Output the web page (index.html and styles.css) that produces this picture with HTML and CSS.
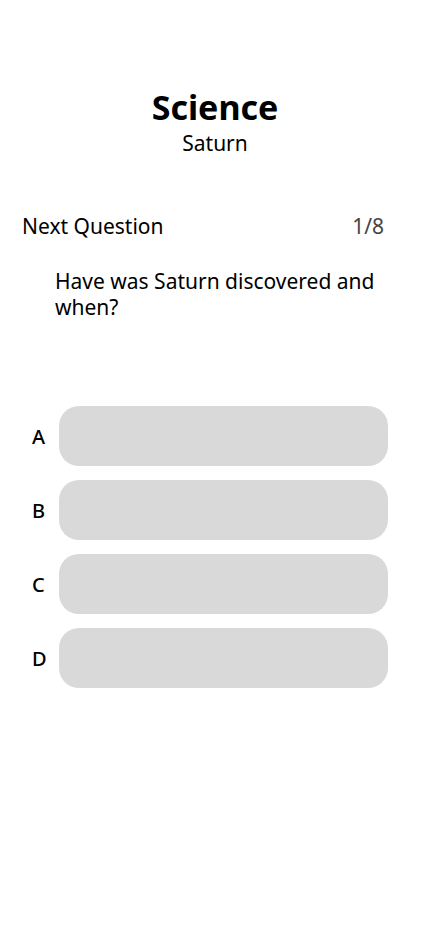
FILE: index.html
```html
<!DOCTYPE html>
<html lang="en">
<head>
<meta charset="utf-8">
<link rel="stylesheet" href="styles.css">
</head>
<body>
<main class="screen">
  <header class="heading">
    <h1 class="title">Science</h1>
    <p class="subtitle">Saturn</p>
  </header>
  <div class="progress">
    <span class="next">Next Question</span>
    <span class="count">1/8</span>
  </div>
  <p class="question">Have was Saturn discovered and when?</p>
  <ul class="options">
    <li class="option"><span class="letter">A</span><span class="answer"></span></li>
    <li class="option"><span class="letter">B</span><span class="answer"></span></li>
    <li class="option"><span class="letter">C</span><span class="answer"></span></li>
    <li class="option"><span class="letter">D</span><span class="answer"></span></li>
  </ul>
</main>
</body>
</html>
```

FILE: styles.css
```css
* { box-sizing: border-box; }
html, body { margin: 0; padding: 0; background: #fff; }
body {
  font-family: "Noto Sans", "Open Sans", sans-serif;
  color: #000;
  width: 430px;
  height: 932px;
}
.screen { display: flex; flex-direction: column; padding-top: 84px; }
.heading { display: flex; flex-direction: column; align-items: center; }
.title { margin: 0; font-size: 34px; font-weight: 700; line-height: 46px; }
.subtitle { margin: 0; font-size: 21px; line-height: 26px; }
.progress {
  display: flex; justify-content: space-between; align-items: center;
  margin-top: 57px; padding: 0 46px 0 22px;
  font-size: 21px; line-height: 26px;
}
.count { color: #444; }
.question {
  margin: 29px 0 0; padding: 0 48px 0 55px;
  font-size: 21px; line-height: 26px;
}
.options {
  list-style: none; margin: 86px 0 0; padding: 0 42px 0 32px;
  display: flex; flex-direction: column; gap: 14px;
}
.option { display: flex; align-items: center; gap: 13px; }
.letter { width: 14px; font-size: 20px; font-weight: 500; }
.answer { flex: 1; height: 60px; border-radius: 20px; background: #d9d9d9; }
```
